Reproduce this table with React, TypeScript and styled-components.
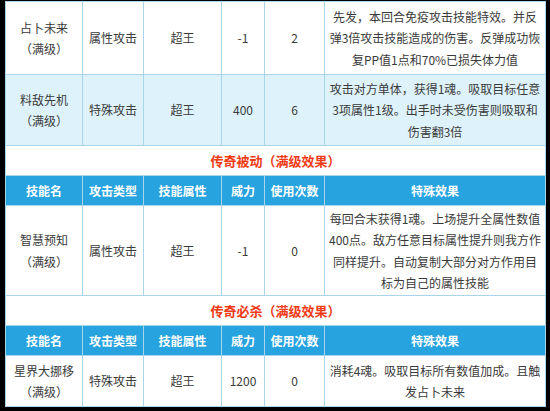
import { createGlobalStyle } from 'styled-components';
import styled from 'styled-components';

const GlobalStyle = createGlobalStyle`
  html, body {
    margin: 0;
    padding: 0;
    background: #000;
  }
  body {
    font-family: "Noto Sans CJK SC", "Noto Sans", sans-serif;
  }
`;

const Frame = styled.div`
  width: 550px;
  height: 411px;
  padding: 1px 5px 0 5px;
  box-sizing: border-box;
  overflow: hidden;
`;

const Table = styled.table`
  width: 540px;
  table-layout: fixed;
  border-collapse: collapse;
  background: #fff;
  border: 1px solid #a8d5ec;
`;

const Row = styled.tr<{ $h: number; $tint?: boolean }>`
  height: ${({ $h }) => $h}px;
  background: ${({ $tint }) => ($tint ? '#def2fb' : '#fff')};
`;

const Cell = styled.td`
  border: 1px solid #a8d5ec;
  padding: 0;
  text-align: center;
  vertical-align: middle;
  font-size: 12px;
  line-height: 21.5px;
  color: #3a3a3a;
`;

const Line = styled.span`
  display: block;
  white-space: nowrap;
`;

const HeadCell = styled.th`
  border: 1px solid #a8d5ec;
  background: #27a3df;
  color: #fff;
  font-size: 12px;
  font-weight: 700;
  text-align: center;
  padding: 0;
`;

const TitleCell = styled.td`
  border: 1px solid #a8d5ec;
  text-align: center;
  color: #ee3b16;
  font-size: 13px;
  font-weight: 700;
  padding: 0;
`;

const widths = [77, 61, 78, 43, 60, 221];
const heads = ['技能名', '攻击类型', '技能属性', '威力', '使用次数', '特殊效果'];

interface Skill {
  name: string;
  kind: string;
  attr: string;
  power: string;
  uses: string;
  effect: string[];
  h: number;
  tint?: boolean;
}

const SkillRow = ({ s }: { s: Skill }) => (
  <Row $h={s.h} $tint={s.tint}>
    <Cell>
      <Line>{s.name}</Line>
      <Line>（满级）</Line>
    </Cell>
    <Cell>{s.kind}</Cell>
    <Cell>{s.attr}</Cell>
    <Cell>{s.power}</Cell>
    <Cell>{s.uses}</Cell>
    <Cell>
      {s.effect.map((l) => (
        <Line key={l}>{l}</Line>
      ))}
    </Cell>
  </Row>
);

const HeadRow = () => (
  <Row $h={30}>
    {heads.map((h) => (
      <HeadCell key={h}>{h}</HeadCell>
    ))}
  </Row>
);

const top: Skill[] = [
  {
    name: '占卜未来',
    kind: '属性攻击',
    attr: '超王',
    power: '-1',
    uses: '2',
    effect: ['先发，本回合免疫攻击技能特效。并反', '弹3倍攻击技能造成的伤害。反弹成功恢', '复PP值1点和70%已损失体力值'],
    h: 73,
  },
  {
    name: '料敌先机',
    kind: '特殊攻击',
    attr: '超王',
    power: '400',
    uses: '6',
    effect: ['攻击对方单体，获得1魂。吸取目标任意', '3项属性1级。出手时未受伤害则吸取和', '伤害翻3倍'],
    h: 71,
    tint: true,
  },
];

const passive: Skill = {
  name: '智慧预知',
  kind: '属性攻击',
  attr: '超王',
  power: '-1',
  uses: '0',
  effect: [
    '每回合末获得1魂。上场提升全属性数值',
    '400点。敌方任意目标属性提升则我方作',
    '同样提升。自动复制大部分对方作用目',
    '标为自己的属性技能',
  ],
  h: 90,
};

const ultimate: Skill = {
  name: '星界大挪移',
  kind: '特殊攻击',
  attr: '超王',
  power: '1200',
  uses: '0',
  effect: ['消耗4魂。吸取目标所有数值加成。且触', '发占卜未来'],
  h: 51,
};

export default function App() {
  return (
    <Frame>
      <GlobalStyle />
      <Table>
        <colgroup>
          {widths.map((w, i) => (
            <col key={i} style={{ width: w }} />
          ))}
        </colgroup>
        <tbody>
          {top.map((s) => (
            <SkillRow key={s.name} s={s} />
          ))}
          <Row $h={30}>
            <TitleCell colSpan={6}>传奇被动（满级效果）</TitleCell>
          </Row>
          <HeadRow />
          <SkillRow s={passive} />
          <Row $h={30}>
            <TitleCell colSpan={6}>传奇必杀（满级效果）</TitleCell>
          </Row>
          <HeadRow />
          <SkillRow s={ultimate} />
        </tbody>
      </Table>
    </Frame>
  );
}
